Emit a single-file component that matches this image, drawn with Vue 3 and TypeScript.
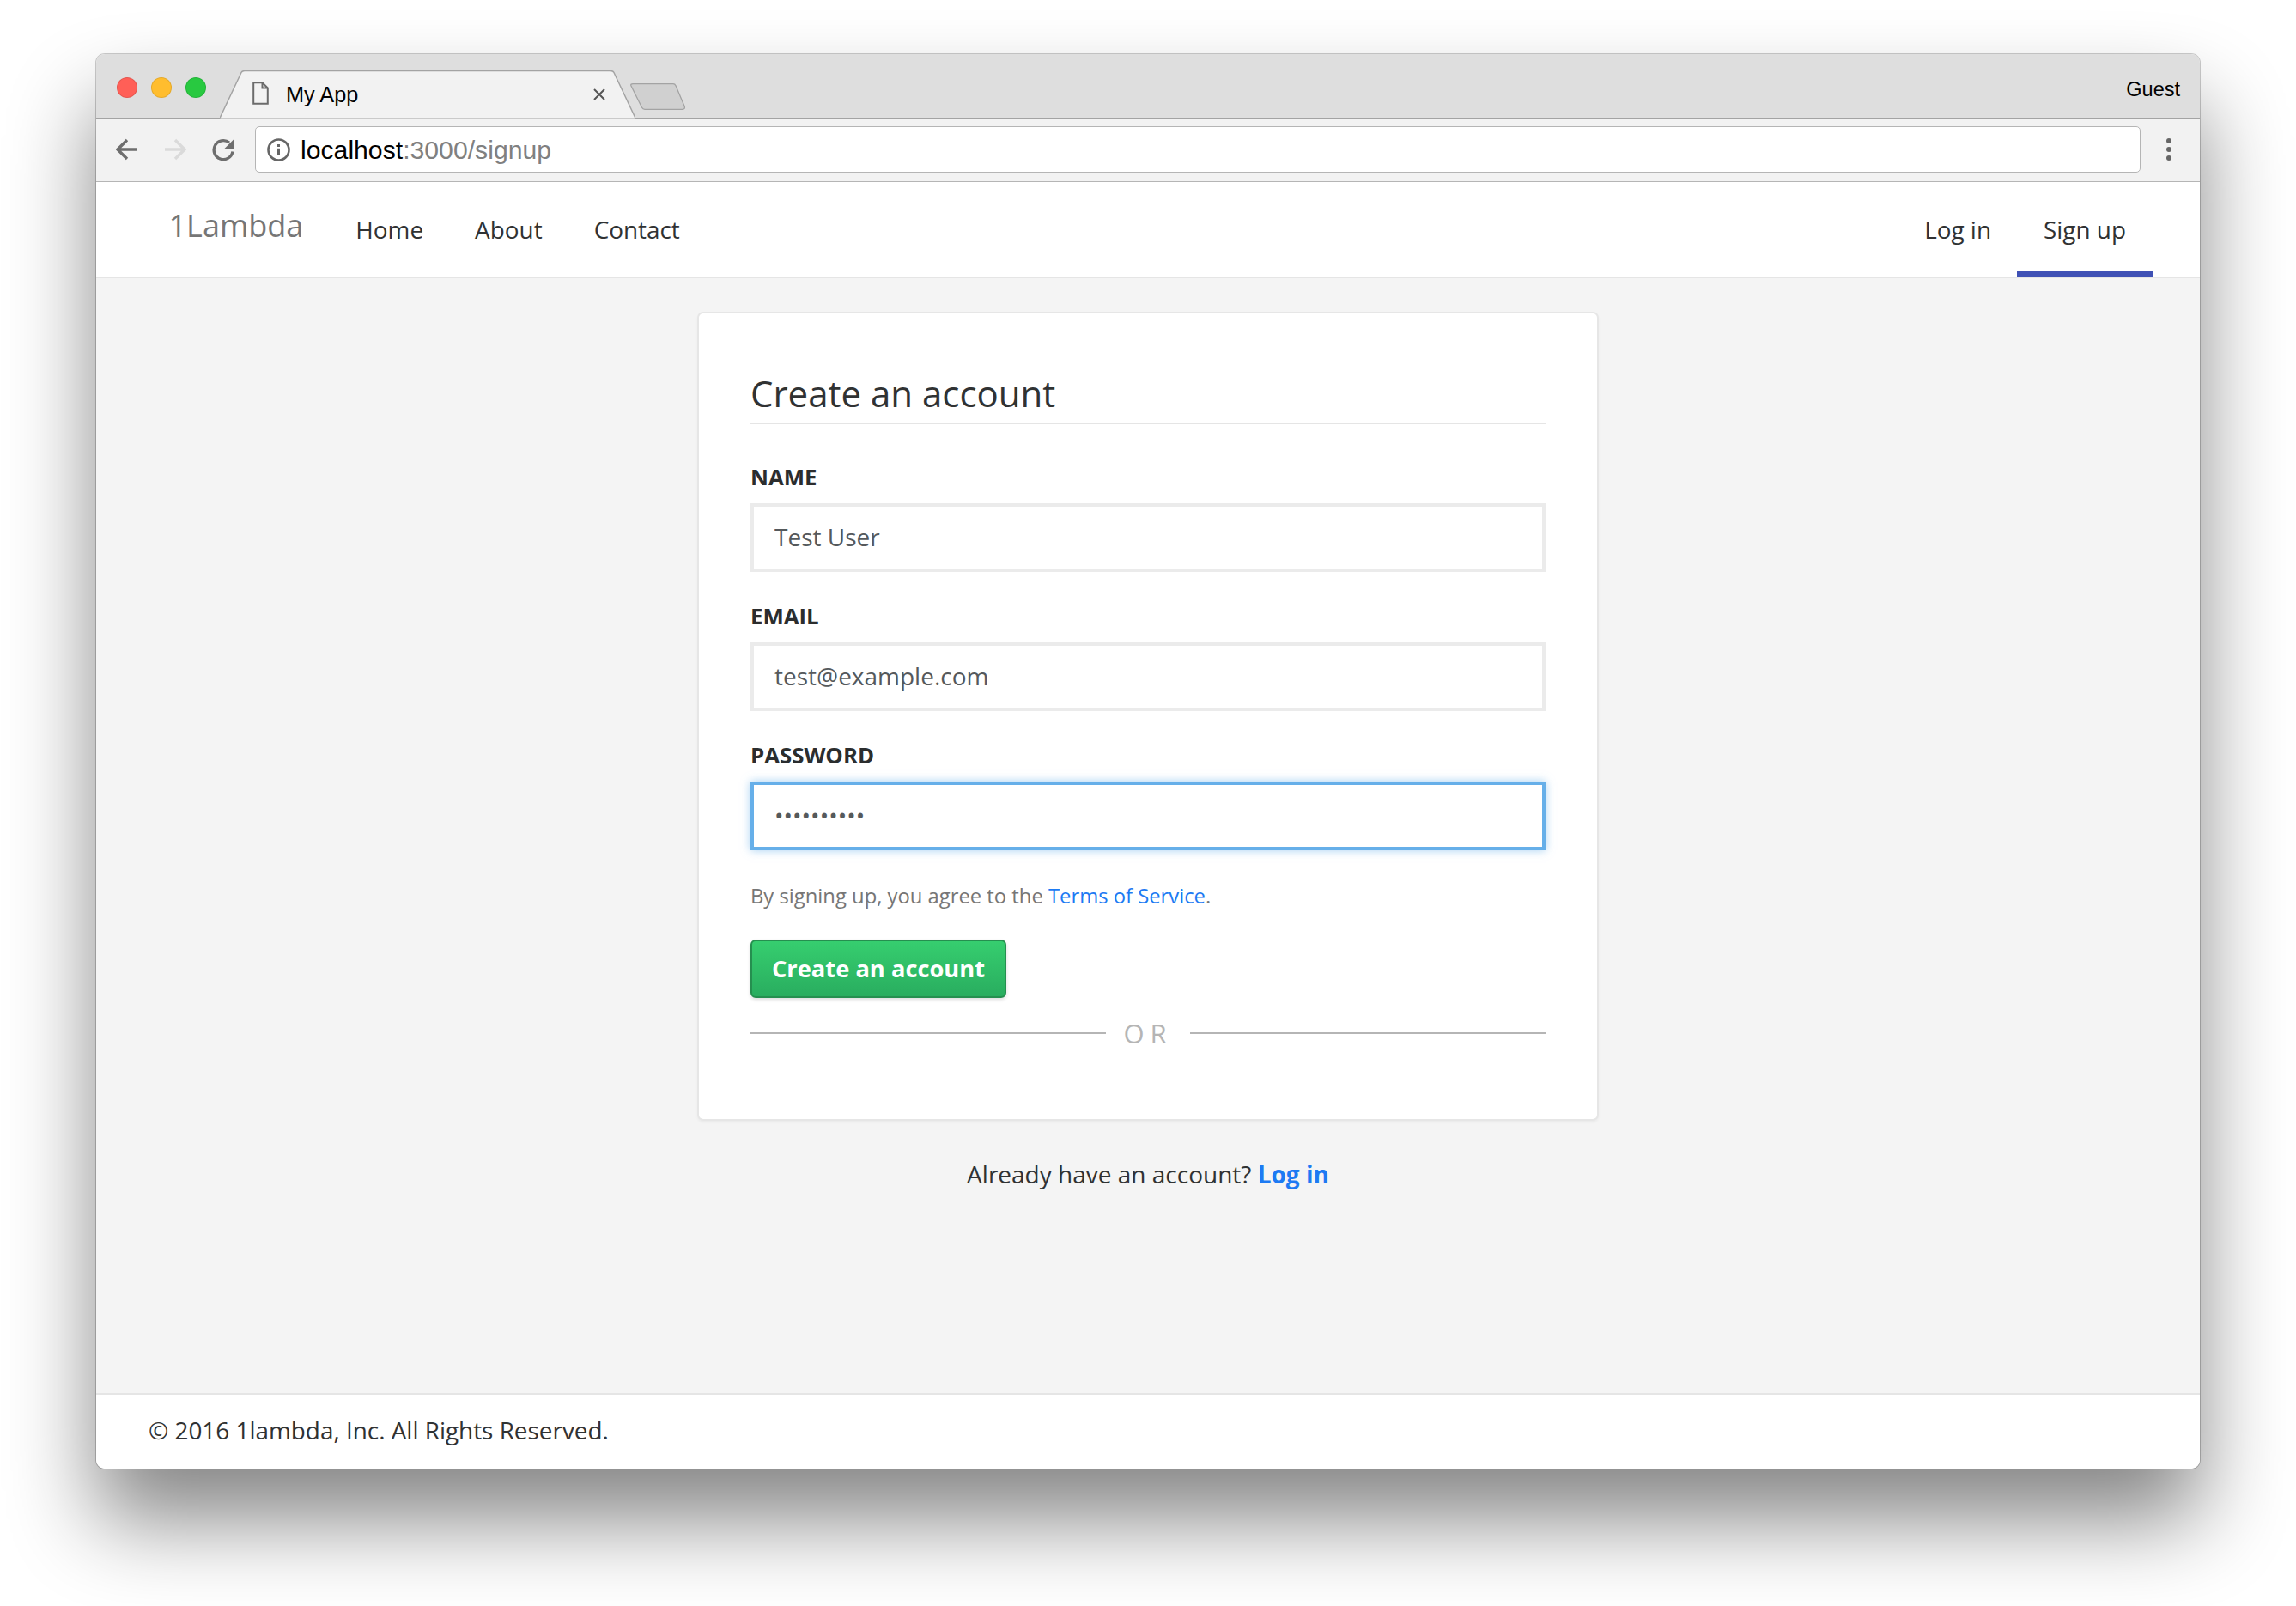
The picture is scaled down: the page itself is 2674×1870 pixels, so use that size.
<script setup lang="ts">
const navLeft: string[] = ['Home', 'About', 'Contact']
</script>

<template>
  <div class="scene">
    <div class="window">
      <header class="strip">
        <div class="lights">
          <span class="light red"></span>
          <span class="light yellow"></span>
          <span class="light green"></span>
        </div>
        <div class="tab">
          <svg class="tab-shape" width="484" height="56" viewBox="0 0 484 56">
            <path d="M0 55.5 L25 2.5 Q26 0.5 29 0.5 H455 Q458 0.5 459 2.5 L484 55.5 Z" fill="#f2f2f2" />
            <path d="M0 55.5 L25 2.5 Q26 0.5 29 0.5 H455 Q458 0.5 459 2.5 L484 55.5" fill="none" stroke="#a3a3a3" stroke-width="1.5" />
          </svg>
          <svg class="file" width="19" height="27" viewBox="0 0 19 27">
            <path d="M1.2 1.2 H11.5 L17.8 7.5 V25.8 H1.2 Z M11.5 1.2 V7.5 H17.8" fill="none" stroke="#6b6b6b" stroke-width="2" />
          </svg>
          <span class="tab-title">My App</span>
          <svg class="close" width="14" height="14" viewBox="0 0 14 14">
            <path d="M1 1 L13 13 M13 1 L1 13" stroke="#555" stroke-width="2" />
          </svg>
        </div>
        <svg class="new-tab" width="64" height="31" viewBox="0 0 64 31">
          <path d="M3 0.7 H50 Q52 0.7 53 2.7 L63.2 27 Q64 30.3 61 30.3 H17 Q14.6 30.3 13.6 28.3 L1 3 Q0 0.7 3 0.7 Z" fill="#d0d0d0" stroke="#a3a3a3" stroke-width="1.3" />
        </svg>
        <span class="guest">Guest</span>
      </header>

      <div class="toolbar">
        <svg class="tool" width="26" height="26" viewBox="0 0 26 26">
          <path d="M25 13 H3 M13 2 L2 13 L13 24" fill="none" stroke="#6e6e6e" stroke-width="3.4" />
        </svg>
        <svg class="tool" width="26" height="26" viewBox="0 0 26 26">
          <path d="M1 13 H23 M13 2 L24 13 L13 24" fill="none" stroke="#dadada" stroke-width="3.4" />
        </svg>
        <svg class="tool" width="26" height="26" viewBox="0 0 26 26">
          <path d="M20 5 A11 11 0 1 0 24 15.5" fill="none" stroke="#6e6e6e" stroke-width="3.4" />
          <path d="M26 0.5 V12.5 H14 Z" fill="#6e6e6e" />
        </svg>
        <div class="address">
          <svg width="27" height="27" viewBox="0 0 27 27">
            <circle cx="13.5" cy="13.5" r="12" fill="none" stroke="#666" stroke-width="2.6" />
            <rect x="12" y="7" width="3" height="3" fill="#666" />
            <rect x="12" y="11.8" width="3" height="8.2" fill="#666" />
          </svg>
          <span class="url"><span class="host">localhost</span>:3000/signup</span>
        </div>
        <div class="dots"><i></i><i></i><i></i></div>
      </div>

      <nav class="nav">
        <span class="brand">1Lambda</span>
        <a v-for="item in navLeft" :key="item" class="link">{{ item }}</a>
        <span class="spacer"></span>
        <a class="link">Log in</a>
        <a class="link active">Sign up</a>
      </nav>

      <main class="content">
        <section class="card">
          <h1 class="title">Create an account</h1>
          <div class="field first">
            <label class="label">Name</label>
            <input class="input" type="text" value="Test User" />
          </div>
          <div class="field">
            <label class="label">Email</label>
            <input class="input" type="text" value="test@example.com" />
          </div>
          <div class="field">
            <label class="label">Password</label>
            <input class="input focus" type="password" value="1234567890" />
          </div>
          <p class="terms">By signing up, you agree to the <a>Terms of Service</a>.</p>
          <button class="submit" type="button">Create an account</button>
          <div class="or"><span class="rule"></span><span class="or-text">OR</span><span class="rule"></span></div>
        </section>
        <p class="already">Already have an account? <a>Log in</a></p>
      </main>

      <footer class="footer">© 2016 1lambda, Inc. All Rights Reserved.</footer>
    </div>
  </div>
</template>

<style scoped>
.scene {
  width: 2674px;
  height: 1870px;
  box-sizing: border-box;
  padding: 63px 0 0 112px;
  background: #fff;
  overflow: hidden;
}
.window {
  width: 2450px;
  height: 1647px;
  display: flex;
  flex-direction: column;
  border-radius: 10px;
  overflow: hidden;
  background: #fff;
  box-shadow: 0 0 0 1px rgba(0, 0, 0, 0.2), 0 60px 100px rgba(0, 0, 0, 0.48);
  font-family: "Open Sans", sans-serif;
  color: #303233;
}
.strip {
  height: 75px;
  box-sizing: border-box;
  flex: none;
  display: flex;
  background: #dedede;
  border-bottom: 1px solid #a3a3a3;
  font-family: "Liberation Sans", Arial, sans-serif;
  color: #000;
}
.lights {
  display: flex;
  gap: 16px;
  margin: 27px 0 0 24px;
}
.light {
  width: 24px;
  height: 24px;
  box-sizing: border-box;
  border-radius: 50%;
  border: 1px solid rgba(0, 0, 0, 0.1);
}
.red { background: #ff5f57; }
.yellow { background: #ffbd2e; }
.green { background: #28c940; }
.tab {
  position: relative;
  width: 484px;
  height: 56px;
  flex: none;
  margin: 19px 0 0 16px;
  z-index: 1;
  display: flex;
  align-items: center;
}
.tab-shape {
  position: absolute;
  left: 0;
  top: 0;
}
.file {
  position: relative;
  margin: -3px 0 0 38px;
}
.tab-title {
  position: relative;
  margin: 0 0 0 20px;
  font-size: 25.3px;
  line-height: 56px;
}
.close {
  position: absolute;
  left: 435px;
  top: 21px;
}
.new-tab {
  flex: none;
  margin: 34px 0 0 -6px;
}
.guest {
  margin: 29px 23px 0 auto;
  font-size: 23.5px;
  line-height: 24px;
}
.toolbar {
  height: 74px;
  box-sizing: border-box;
  flex: none;
  display: flex;
  align-items: center;
  gap: 30px;
  padding: 0 33px 1px 23px;
  background: #f2f2f2;
  border-bottom: 1px solid #b5b5b5;
}
.address {
  flex: 1;
  height: 54px;
  box-sizing: border-box;
  margin-left: -6px;
  display: flex;
  align-items: center;
  gap: 12px;
  padding: 0 0 0 13px;
  background: #fff;
  border: 1.5px solid #b5b5b5;
  border-radius: 5px;
}
.url {
  padding-top: 2px;
  font-family: "Liberation Sans", Arial, sans-serif;
  font-size: 30.2px;
  color: #808080;
}
.host { color: #000; }
.dots {
  display: flex;
  flex-direction: column;
  gap: 4px;
}
.dots i {
  width: 6px;
  height: 6px;
  border-radius: 50%;
  background: #666;
}
.nav {
  height: 112px;
  box-sizing: border-box;
  flex: none;
  display: flex;
  padding: 0 54px 0 84.5px;
  background: #fff;
  border-bottom: 2px solid #e5e5e5;
}
.brand {
  margin-right: 31px;
  font-size: 36px;
  line-height: 102px;
  color: #767676;
}
.link {
  height: 110px;
  box-sizing: border-box;
  padding: 0 30px;
  border-bottom: 6px solid transparent;
  font-size: 27.9px;
  line-height: 110px;
  color: #303233;
}
.link.active {
  padding: 0 32px 0 31px;
  border-bottom-color: #3f51b5;
}
.spacer { flex: 1; }
.content {
  flex: 1;
  background: #f4f4f4;
  padding-top: 39px;
}
.card {
  width: 1050px;
  box-sizing: border-box;
  margin: 0 auto;
  padding: 65px 60px 79px;
  background: #fff;
  border: 2px solid #e6e6e6;
  border-radius: 7px;
  box-shadow: 0 2px 3px rgba(0, 0, 0, 0.04);
}
.title {
  margin: 0;
  padding-bottom: 6px;
  border-bottom: 2px solid #e5e5e5;
  font-size: 42px;
  font-weight: 400;
  line-height: 56px;
  color: #303233;
}
.field { margin-top: 34px; }
.field.first { margin-top: 44px; }
.label {
  display: block;
  margin-bottom: 14px;
  font-size: 25.8px;
  font-weight: 700;
  line-height: 34px;
  text-transform: uppercase;
  color: #2b2d2e;
}
.input {
  display: block;
  width: 100%;
  height: 80px;
  box-sizing: border-box;
  padding: 0 24px 2px;
  border: 4px solid #ebebeb;
  border-radius: 0;
  outline: none;
  background: #fff;
  font-family: "Open Sans", sans-serif;
  font-size: 28px;
  color: #55595c;
}
.input.focus {
  border-color: #66afe9;
  box-shadow: 0 0 10px rgba(102, 175, 233, 0.6);
}
.terms {
  margin: 35px 0 0;
  font-size: 23.8px;
  line-height: 36px;
  color: #767676;
}
.terms a, .already a { color: #1d7af3; }
.submit {
  display: block;
  width: 298px;
  height: 68px;
  margin-top: 33px;
  padding: 0 0 2px;
  border: 2px solid #258f4f;
  border-radius: 6px;
  background: linear-gradient(#36ce6f, #29ad5f);
  box-shadow: 0 2px 4px rgba(0, 0, 0, 0.14);
  font-family: "Open Sans", sans-serif;
  font-size: 27.3px;
  font-weight: 700;
  color: #fff;
}
.or {
  display: flex;
  align-items: center;
  margin-top: 20px;
}
.rule {
  flex: 1;
  height: 2px;
  background: #b5b5b5;
}
.or-text {
  margin: 0 20.5px;
  font-size: 31px;
  line-height: 42px;
  letter-spacing: 7px;
  color: #b5b5b5;
}
.already {
  margin: 42px 0 0;
  font-size: 28px;
  line-height: 40px;
  text-align: center;
  color: #303233;
}
.already a { font-weight: 700; }
.footer {
  height: 88px;
  box-sizing: border-box;
  flex: none;
  padding: 21px 0 0 61px;
  background: #fff;
  border-top: 2px solid #e5e5e5;
  font-size: 27.9px;
  line-height: 40px;
  color: #303233;
}
</style>
